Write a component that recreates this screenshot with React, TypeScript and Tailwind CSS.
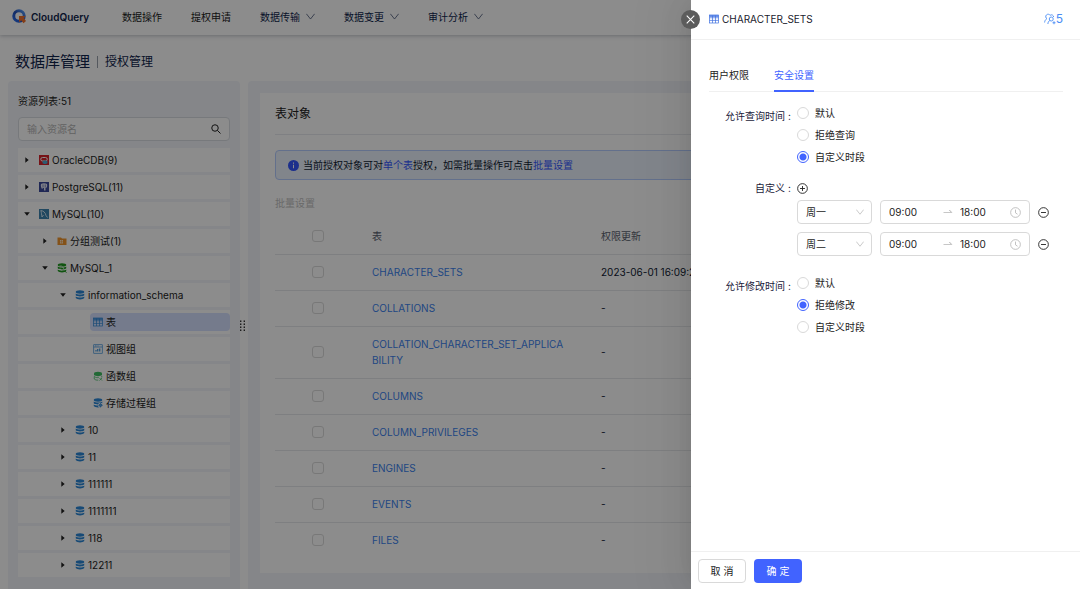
import { useState, type ReactNode } from "react";

type IconName =
  | "oracle"
  | "postgres"
  | "mysql"
  | "folder"
  | "connection"
  | "database"
  | "table"
  | "view"
  | "function"
  | "procedure";

interface TreeNode {
  label: string;
  icon: IconName;
  level: 0 | 1 | 2 | 3;
  open?: boolean;
}

const navItems = [
  { label: "数据操作", menu: false },
  { label: "提权申请", menu: false },
  { label: "数据传输", menu: true },
  { label: "数据变更", menu: true },
  { label: "审计分析", menu: true },
];

const nodes: TreeNode[] = [
  { label: "OracleCDB(9)", icon: "oracle", level: 0 },
  { label: "PostgreSQL(11)", icon: "postgres", level: 0 },
  { label: "MySQL(10)", icon: "mysql", level: 0, open: true },
  { label: "分组测试(1)", icon: "folder", level: 1 },
  { label: "MySQL_1", icon: "connection", level: 1, open: true },
  { label: "information_schema", icon: "database", level: 2, open: true },
  { label: "表", icon: "table", level: 3 },
  { label: "视图组", icon: "view", level: 3 },
  { label: "函数组", icon: "function", level: 3 },
  { label: "存储过程组", icon: "procedure", level: 3 },
  { label: "10", icon: "database", level: 2 },
  { label: "11", icon: "database", level: 2 },
  { label: "111111", icon: "database", level: 2 },
  { label: "1111111", icon: "database", level: 2 },
  { label: "118", icon: "database", level: 2 },
  { label: "12211", icon: "database", level: 2 },
];

const tables = [
  { name: "CHARACTER_SETS", updated: "2023-06-01 16:09:21" },
  { name: "COLLATIONS", updated: "-" },
  { name: "COLLATION_CHARACTER_SET_APPLICABILITY", updated: "-" },
  { name: "COLUMNS", updated: "-" },
  { name: "COLUMN_PRIVILEGES", updated: "-" },
  { name: "ENGINES", updated: "-" },
  { name: "EVENTS", updated: "-" },
  { name: "FILES", updated: "-" },
];

const indent = ["pl-0", "pl-[18px]", "pl-9", "pl-[54px]"];

export default function App() {
  return (
    <div className="relative h-screen overflow-hidden bg-white font-['Inter','Noto_Sans_CJK_SC',sans-serif] text-[10px] leading-4 text-[#222]">
      <div className="flex h-full flex-col">
        <Header />
        <h1 className="flex items-center px-[15px] pt-[17px] pb-[9px] text-[#0f244c]">
          <span className="text-[15px] leading-5">数据库管理</span>
          <span className="mx-[7px] h-3 w-px bg-[#9aa0ac]" />
          <span className="text-xs leading-5">授权管理</span>
        </h1>
        <main className="flex min-h-0 flex-1 pl-2">
          <Sidebar />
          <div className="flex w-2 shrink-0 items-center pb-[18px]">
            <DragDots />
          </div>
          <TablePanel />
        </main>
      </div>
      <div className="absolute inset-0 bg-black/45" />
      <Drawer />
    </div>
  );
}

function Header() {
  return (
    <header className="relative flex h-[35px] shrink-0 items-center pb-[2px] shadow-[0_1px_4px_rgba(0,21,41,0.25)]">
      <a href="#" className="flex w-[122px] shrink-0 items-center gap-1 pl-3">
        <Logo />
        <span className="font-semibold text-[#0f244c]">CloudQuery</span>
      </a>
      <nav className="flex items-center gap-[29px]">
        {navItems.map((item) => (
          <a
            key={item.label}
            href="#"
            className={item.menu ? "flex items-center gap-[6px] text-[#0f244c]" : "text-[#222]"}
          >
            {item.label}
            {item.menu && <Chevron className="h-[9px] w-[9px] text-[#4a5878]" />}
          </a>
        ))}
      </nav>
    </header>
  );
}

function Sidebar() {
  const [selected, setSelected] = useState("表");

  return (
    <aside className="w-[232px] shrink-0 overflow-hidden rounded-t bg-[#f2f5fa] px-[10px] pt-3">
      <h2>资源列表:51</h2>
      <label className="mt-2 mb-[7px] flex h-6 items-center rounded-sm border border-[#d9dce2] bg-white px-2">
        <input
          aria-label="输入资源名"
          placeholder="输入资源名"
          className="min-w-0 flex-1 outline-none placeholder:text-[#b4b4b4]"
        />
        <svg viewBox="0 0 12 12" className="h-[10px] w-[10px]" fill="none" stroke="currentColor" strokeWidth="1.2">
          <circle cx="4.8" cy="4.8" r="3.9" />
          <path d="M7.7 7.7 11.4 11.4" />
        </svg>
      </label>
      <ul className="flex flex-col gap-[3px]">
        {nodes.map((node) => (
          <li key={node.label} className={`flex h-6 items-center bg-white ${indent[node.level]}`}>
            <span className="flex w-[18px] shrink-0 justify-center">
              {node.level < 3 && <Caret open={node.open} />}
            </span>
            <button
              type="button"
              onClick={() => setSelected(node.label)}
              className={`flex h-[18px] flex-1 items-center gap-[3px] rounded-sm px-[3px] text-left ${
                selected === node.label ? "bg-[#d5e0ff]" : ""
              }`}
            >
              <NodeIcon name={node.icon} />
              {node.label}
            </button>
          </li>
        ))}
      </ul>
    </aside>
  );
}

function TablePanel() {
  return (
    <section className="min-w-0 flex-1 overflow-hidden rounded-t bg-[#f2f5fa] p-3">
      <div className="bg-white px-[15px] pb-[14px]">
        <h2 className="border-b border-[#e8eaee] pt-[11px] pb-[10px] text-xs leading-5">表对象</h2>
        <div className="mt-[15px] flex h-[30px] items-center rounded-sm border border-[#b4ccff] bg-[#ebf2fd] px-3 text-[#0f1a33]">
          <svg viewBox="0 0 12 12" className="mr-1 h-[11px] w-[11px]">
            <circle cx="6" cy="6" r="6" fill="#3357ff" />
            <path d="M6 5.2v3.8M6 2.8v1.3" stroke="#fff" strokeWidth="1.1" />
          </svg>
          <p>
            当前授权对象可对<span className="text-[#3357ff]">单个表</span>授权，如需批量操作可点击
            <a href="#" className="text-[#3357ff]">批量设置</a>
          </p>
        </div>
        <button type="button" disabled className="mt-[15px] block text-[#bfbfbf]">
          批量设置
        </button>
        <table className="mt-2 w-full table-fixed text-left">
          <thead>
            <tr className="border-b border-[#e6e8ec] text-[#5b6270]">
              <th className="w-[85px] pt-[9px] pb-[10px]">
                <Checkbox label="全选" />
              </th>
              <th className="w-[229px] px-3 pt-[9px] pb-[10px] font-normal">表</th>
              <th className="px-3 pt-[9px] pb-[10px] font-normal">权限更新</th>
            </tr>
          </thead>
          <tbody>
            {tables.map((table) => (
              <tr key={table.name} className="border-b border-[#e6e8ec] last:border-transparent">
                <td className="pt-[9px] pb-[10px]">
                  <Checkbox label={table.name} />
                </td>
                <td className="pt-[9px] pr-6 pb-[10px] pl-3 break-all">
                  <a href="#" className="text-[#3c82ee]">{table.name}</a>
                </td>
                <td className="px-3 pt-[9px] pb-[10px] whitespace-nowrap text-[#0f1a33]">{table.updated}</td>
              </tr>
            ))}
          </tbody>
        </table>
      </div>
    </section>
  );
}

function Checkbox({ label }: { label: string }) {
  return (
    <input
      type="checkbox"
      aria-label={label}
      className="mx-auto block h-3 w-3 appearance-none rounded-[3px] border border-[#dadada] bg-white"
    />
  );
}

function Drawer() {
  const [tab, setTab] = useState("安全设置");

  return (
    <div
      role="dialog"
      aria-label="CHARACTER_SETS"
      className="absolute inset-y-0 right-0 flex w-[389px] flex-col bg-white shadow-[-6px_0_16px_-8px_rgba(0,0,0,0.08),-9px_0_28px_rgba(0,0,0,0.05),-12px_0_48px_16px_rgba(0,0,0,0.03)]"
    >
      <button
        type="button"
        aria-label="关闭"
        className="absolute top-[10px] -left-[10px] flex h-[19px] w-[19px] items-center justify-center rounded-full bg-[#5c5c5c] text-white"
      >
        <svg viewBox="0 0 10 10" className="h-[9px] w-[9px]" fill="none" stroke="currentColor" strokeWidth="1.2">
          <path d="M.8.8l8.4 8.4M9.2.8.8 9.2" />
        </svg>
      </button>
      <header className="flex h-10 shrink-0 items-center gap-[3px] border-b border-[#f0f0f0] pr-[17px] pb-[2px] pl-[18px]">
        <TableIcon className="h-[10px] w-[10px] text-[#3d6fe0]" />
        <h2 className="flex-1 text-[#1a1a2e]">CHARACTER_SETS</h2>
        <a href="#" className="flex items-center text-xs text-[#4a8df5]">
          <UsersIcon />5
        </a>
      </header>

      <div className="flex-1 overflow-auto pt-[27px] pr-[17px] pl-[18px]">
        <div role="tablist" className="flex gap-[25px] border-b border-[#f0f0f0]">
          {["用户权限", "安全设置"].map((name) => (
            <button
              key={name}
              type="button"
              role="tab"
              aria-selected={tab === name}
              onClick={() => setTab(name)}
              className={`-mb-px border-b-2 pb-[7px] ${
                tab === name ? "border-[#4163ff] text-[#4163ff]" : "border-transparent"
              }`}
            >
              {name}
            </button>
          ))}
        </div>
        <form className="pt-[10px]">
          <FormRow label="允许查询时间" labelClass="pt-[6px]">
            <RadioGroup name="query" options={["默认", "拒绝查询", "自定义时段"]} initial="自定义时段" />
          </FormRow>
          <div className="mt-3 mb-4">
            <FormRow label="自定义">
              <button type="button" aria-label="添加时段" className="flex h-4 items-center">
                <CircleIcon plus />
              </button>
              <div className="mt-1 flex flex-col gap-2">
                <TimeSlot day="周一" />
                <TimeSlot day="周二" />
              </div>
            </FormRow>
          </div>
          <FormRow label="允许修改时间" labelClass="pt-[6px]">
            <RadioGroup name="modify" options={["默认", "拒绝修改", "自定义时段"]} initial="拒绝修改" />
          </FormRow>
        </form>
      </div>

      <footer className="flex gap-2 border-t border-[#f0f0f0] px-[7px] pt-[7px] pb-[6px]">
        <button type="button" className="h-6 w-12 rounded-sm border border-[#d9d9d9]">
          取 消
        </button>
        <button type="button" className="h-6 w-12 rounded-sm bg-[#4163ff] text-white">
          确 定
        </button>
      </footer>
    </div>
  );
}

function FormRow({ label, labelClass = "", children }: { label: string; labelClass?: string; children: ReactNode }) {
  return (
    <div role="group" aria-label={label} className="flex">
      <div className={`w-[88px] shrink-0 text-right text-[#1a1a3a] ${labelClass}`}>
        {label}
        <span className="mr-[6px] ml-[3px]">:</span>
      </div>
      <div className="min-w-0 flex-1">{children}</div>
    </div>
  );
}

function RadioGroup({ name, options, initial }: { name: string; options: string[]; initial: string }) {
  const [value, setValue] = useState(initial);

  return (
    <div>
      {options.map((option) => (
        <label key={option} className="flex h-[22px] items-center gap-[6px]">
          <input
            type="radio"
            name={name}
            checked={value === option}
            onChange={() => setValue(option)}
            className="h-3 w-3 appearance-none rounded-full border border-[#d9d9d9] bg-white checked:border-[#4163ff] checked:bg-[radial-gradient(circle,#4163ff_3px,transparent_4px)]"
          />
          {option}
        </label>
      ))}
    </div>
  );
}

function TimeSlot({ day }: { day: string }) {
  return (
    <div className="flex items-center gap-2">
      <div className="relative w-[75px]">
        <select
          aria-label="星期"
          defaultValue={day}
          className="h-6 w-full appearance-none rounded-sm border border-[#d9d9d9] bg-white pl-2"
        >
          <option>周一</option>
          <option>周二</option>
        </select>
        <Chevron className="pointer-events-none absolute top-2 right-2 h-2 w-2 text-[#b5b5b5]" />
      </div>
      <div className="flex h-6 w-[150px] items-center rounded-sm border border-[#d9d9d9] px-2">
        <input aria-label="开始时间" defaultValue="09:00" className="w-[54px] outline-none" />
        <svg viewBox="0 0 10 10" className="mr-[7px] h-[10px] w-[10px] text-[#b5b5b5]" fill="currentColor">
          <path d="M.5 5h7.2L5.8 3h1.1l2.6 2.8H.5z" />
        </svg>
        <input aria-label="结束时间" defaultValue="18:00" className="min-w-0 flex-1 outline-none" />
        <svg viewBox="0 0 12 12" className="h-[11px] w-[11px] text-[#b5b5b5]" fill="none" stroke="currentColor" strokeWidth=".9">
          <circle cx="6" cy="6" r="5.3" />
          <path d="M6 2.8v3.6l2.2 1.5" />
        </svg>
      </div>
      <button type="button" aria-label="删除时段">
        <CircleIcon />
      </button>
    </div>
  );
}

function CircleIcon({ plus }: { plus?: boolean }) {
  return (
    <svg viewBox="0 0 12 12" className="h-[11px] w-[11px]" fill="none" stroke="currentColor" strokeWidth="1">
      <circle cx="6" cy="6" r="5.3" />
      <path d={plus ? "M3.3 6h5.4M6 3.3v5.4" : "M3.3 6h5.4"} />
    </svg>
  );
}

function Chevron({ className }: { className: string }) {
  return (
    <svg viewBox="0 0 10 10" className={className} fill="none" stroke="currentColor" strokeWidth=".9">
      <path d="M.4 2 5 7.8 9.6 2" />
    </svg>
  );
}

function Caret({ open }: { open?: boolean }) {
  return (
    <svg viewBox="0 0 6 6" className="h-[6px] w-[6px]" fill="currentColor">
      <path d={open ? "M.2 1.3h5.6L3 4.7z" : "M1.3.2v5.6L4.7 3z"} />
    </svg>
  );
}

function DragDots() {
  return (
    <svg viewBox="0 0 6 12" className="h-3 w-[6px] shrink-0 text-[#222]" fill="currentColor">
      {[0, 3, 6, 9].map((y) => (
        <g key={y}>
          <rect x="0" y={y + 0.5} width="1.4" height="1.4" />
          <rect x="3.6" y={y + 0.5} width="1.4" height="1.4" />
        </g>
      ))}
    </svg>
  );
}

function Logo() {
  return (
    <svg viewBox="0 0 30 30" className="h-[15px] w-[15px]">
      <defs>
        <linearGradient id="ring" x1="0" y1="1" x2="1" y2="0">
          <stop offset="0" stopColor="#2a6ff0" />
          <stop offset=".5" stopColor="#2450b8" />
          <stop offset="1" stopColor="#5aa2ff" />
        </linearGradient>
      </defs>
      <circle cx="14" cy="14" r="10.5" fill="none" stroke="url(#ring)" strokeWidth="6" />
      <path d="M14 14h13l-3.500 4 4.500 6-5 4.500-4.500-6-4.500 4z" fill="#f0702a" />
    </svg>
  );
}

function UsersIcon() {
  return (
    <svg viewBox="0 0 24 24" className="h-3 w-3" fill="none" stroke="currentColor" strokeWidth="1.8">
      <path d="M6 11.500a4.800 4.800 0 1 1 6.500-6.500M5.500 11.500C3 13 1.500 15.500 1.200 19M12.500 4.200a4.600 4.600 0 0 1 6.800 3.800" />
      <circle cx="14.500" cy="12" r="4" />
      <path d="M11.500 15C9 16.500 8 18.500 7.800 22M20 16.500v6M17 19.500h6" />
    </svg>
  );
}

function TableIcon({ className }: { className: string }) {
  return (
    <svg viewBox="0 0 20 20" className={className} fill="none" stroke="currentColor" strokeWidth="1.4">
      <rect x="1" y="2" width="18" height="16" />
      <path d="M1 7.500h18M1 12.800h18M7 3v15M13 3v15" />
      <path d="M1 4h18" strokeWidth="3" />
    </svg>
  );
}

// Three stacked discs shared by the database-like icons
function Discs({ color }: { color: string }) {
  return (
    <g fill={color}>
      <ellipse cx="10" cy="4" rx="8.500" ry="3.400" />
      <path d="M1.500 6.800c3 2.600 14 2.600 17 0v3.700c-2 3.200-15 3.200-17 0z" />
      <path d="M1.500 13c3 2.600 14 2.600 17 0v3.200c-2 3.400-15 3.400-17 0z" />
    </g>
  );
}

function NodeIcon({ name }: { name: IconName }) {
  if (name === "table") return <TableIcon className="h-[10px] w-[10px] shrink-0 text-[#2b87d8]" />;

  return (
    <svg viewBox="0 0 20 20" className="h-[10px] w-[10px] shrink-0">
      {name === "oracle" && (
        <>
          <rect width="20" height="20" fill="#d8232a" />
          <rect x="3.500" y="5" width="13" height="7" rx="3.500" fill="none" stroke="#fff" strokeWidth="2" />
          <path d="M7 12.500c2-2 8-2 10 0v4c-2 2-8 2-10 0z" fill="#4fa8cf" />
        </>
      )}
      {name === "postgres" && (
        <>
          <rect width="20" height="20" fill="#3b4a9c" />
          <path d="M4 4c4-2 9-1.500 12 0 1 4 0 7-2 8h-1v5h-3v-5H8L6 14C4 11 3 7 4 4z" fill="#e6e8f5" />
          <path d="M8 5v6M12.500 5v6" stroke="#3b4a9c" strokeWidth="1.200" />
        </>
      )}
      {name === "mysql" && (
        <>
          <rect width="20" height="20" fill="#3d83b0" />
          <path d="M3 3c5 0 10 4 11 10l3 4M4 4c1 4 1 7 2 12l3-4" fill="none" stroke="#e4f0f7" strokeWidth="1.800" />
        </>
      )}
      {name === "folder" && (
        <>
          <path d="M1 3h7l2 2h9v13H1z" fill="#f0962e" />
          <rect x="6" y="8" width="6" height="7" fill="#fff" opacity=".75" />
          <path d="M9 8v7M6 11.500h6" stroke="#f0962e" />
        </>
      )}
      {name === "connection" && (
        <>
          <Discs color="#1f9a1f" />
          <path d="M5 6c6-1 8 3 9 8l4 4M6 11l3 4" fill="none" stroke="#fff" strokeWidth="1.400" />
          <path d="M13 14l6 5" stroke="#1f9a1f" strokeWidth="2" />
        </>
      )}
      {name === "database" && <Discs color="#2b87d8" />}
      {name === "view" && (
        <g fill="none" stroke="#2b87d8" strokeWidth="1.300">
          <rect x="1.500" y="1.500" width="17" height="17" />
          <path d="M1.500 6h17M4 3.800h3M9 3.800h2" />
          <path d="M6 15v-3M9.500 15v-5M13.500 15V9" strokeWidth="2.200" />
        </g>
      )}
      {name === "function" && (
        <>
          <ellipse cx="10" cy="4.500" rx="8" ry="3.200" fill="#3fbf63" />
          <path d="M2 5v3c3 3 13 3 16 0V5z" fill="#3fbf63" />
          <path d="M2.500 11c3 2.500 7 2.500 9 2M2.500 11v5c2 2 5 2.500 8 2.300M17.500 10v3M13 14l5 5M18 14l-5 5" fill="none" stroke="#3fbf63" strokeWidth="1.500" />
        </>
      )}
      {name === "procedure" && (
        <>
          <Discs color="#2b87d8" />
          <circle cx="15" cy="14.500" r="5" fill="#fff" />
          <circle cx="15" cy="14.500" r="2.500" fill="none" stroke="#2b87d8" strokeWidth="2" />
          <path d="M15 10v9M10.500 14.500h9" stroke="#2b87d8" strokeWidth="1.200" />
        </>
      )}
    </svg>
  );
}
